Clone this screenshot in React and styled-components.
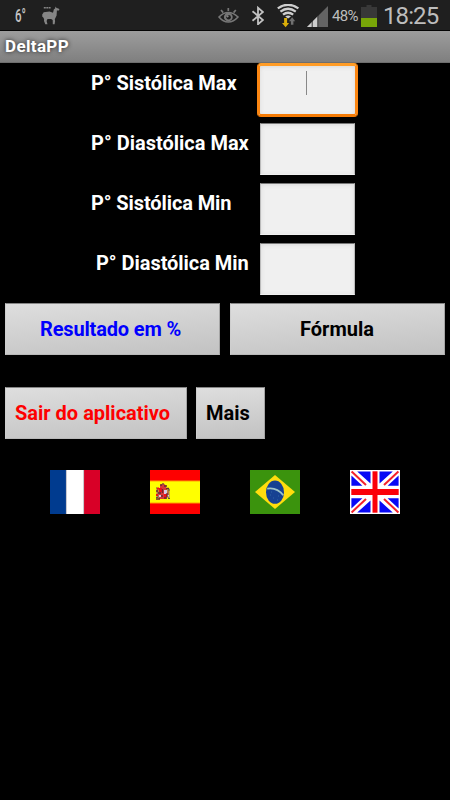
import React from "react";
import styled, { createGlobalStyle } from "styled-components";

const GlobalStyle = createGlobalStyle`
  * { box-sizing: border-box; }
  body { margin: 0; background: #000; overflow: hidden; }
`;

const Screen = styled.div`
  width: 450px;
  height: 800px;
  display: flex;
  flex-direction: column;
  background: #000;
  font-family: Roboto, "Liberation Sans", sans-serif;
`;

const StatusBar = styled.header`
  height: 31px;
  flex: none;
  display: flex;
  align-items: flex-start;
  background: #1f1f1f;
  border-bottom: 1px solid #050505;
  color: #bdbdbd;
  svg { display: block; flex: none; }
`;

const Temperature = styled.span`
  width: 26px;
  margin: 5px 0 0 15px;
  font-size: 18px;
  line-height: 22px;
  transform: scaleX(0.64);
  transform-origin: left;
  color: #c4c4c4;
  font-weight: 500;
`;

const Spacer = styled.div`
  flex: 1;
`;

const Percent = styled.span`
  width: 29px;
  margin-top: 6px;
  font-size: 15px;
  line-height: 20px;
  letter-spacing: -0.65px;
`;

const Clock = styled.span`
  width: 67px;
  margin-top: 3px;
  font-size: 24px;
  line-height: 27px;
  letter-spacing: -0.9px;
`;

const TitleBar = styled.div`
  height: 32px;
  flex: none;
  padding: 5px 5px 0;
  background: linear-gradient(#9d9d9d, #7f7f7f);
  border-bottom: 1px solid #6e6e6e;
  color: #fff;
  font-size: 17px;
  line-height: 21px;
  font-weight: 700;
  letter-spacing: 0.35px;
  text-shadow: 0 0 4px #222;
`;

const Form = styled.main`
  display: flex;
  flex-direction: column;
`;

const FieldRow = styled.label`
  height: 60px;
  display: grid;
  grid-template-columns: 257px 101px;
  align-items: start;
`;

const FieldLabel = styled.span`
  padding-top: 8px;
  padding-left: ${(p) => p.$left}px;
  color: #fff;
  font-size: 20px;
  line-height: 24px;
  font-weight: 700;
  white-space: nowrap;
  letter-spacing: ${(p) => p.$spacing}px;
`;

const FieldBox = styled.span`
  display: flex;
  justify-content: center;
  height: ${(p) => (p.$focused ? 54 : 52)}px;
  margin: ${(p) => (p.$focused ? "0" : "0 3.4px")};
  padding-top: 5px;
  border: ${(p) => (p.$focused ? "3px solid" : "1px solid")};
  border-color: ${(p) => (p.$focused ? "#ff9c26 #fb8612 #f57b05" : "#777 #bbb #f0f0f0")};
  border-radius: ${(p) => (p.$focused ? 4 : 0)}px;
  background: #f0f0f0;
  box-shadow: inset 0 1px 4px #d9d9d9;
`;

const Caret = styled.span`
  width: 1px;
  height: 24px;
  margin-left: -2px;
  background: #888;
`;

const ButtonRow = styled.div`
  display: flex;
  gap: ${(p) => p.$gap}px;
  padding: 0 5px;
  margin-bottom: 32px;
`;

const Button = styled.button`
  width: ${(p) => p.$width}px;
  height: 52px;
  flex: none;
  padding: 0 0 0 ${(p) => p.$inset}px;
  text-align: left;
  border: 1px solid;
  border-color: #858585 #a5a5a5 #b9b9b9 #cecece;
  background: linear-gradient(175deg, #dedede, #c2c2c2);
  color: ${(p) => p.$color};
  font: 700 20px/24px Roboto, "Liberation Sans", sans-serif;
  letter-spacing: ${(p) => p.$spacing || 0}px;
  white-space: nowrap;
`;

const Flags = styled.nav`
  display: flex;
  gap: 50px;
  padding-left: 50px;
  margin-top: -1px;
  svg { display: block; }
`;

const Llama = () => (
  <svg width="20" height="19" viewBox="0 0 20 19" fill="#858585">
    <path d="M2.8 1h2v1.6h-2zM5.3 1h2v1.6h-2zM7.8 1h1.8v1.6H7.8z" />
    <path d="M12 6.8l.9-3.6 1.2-.8.4-1.8 1.1 1.3 1.8.5 1 .9-.4 1.1-2.1.2-.3 5-1.8 3.6.3 1.8-.5 3.3h-1.8l-.1-4.2-1.6-1.1H6.5l-.9 2 .9 3.3H4.3l-1.3-3.3.1-2.1-1-1.7-.8-.4-.1-2.4 1.5-2.1 5.8-.7z" />
  </svg>
);

const Eye = () => (
  <svg width="21" height="18" viewBox="0 0 21 18" fill="none" stroke="#777">
    <path d="M1 11Q5.2 6.5 10.3 6.5T20 11Q15.5 16 10.3 16T1 11Z" strokeWidth="1.6" />
    <circle cx="10.3" cy="11" r="4.4" fill="#777" stroke="none" />
    <circle cx="10.6" cy="11.3" r="2.3" fill="#1f1f1f" stroke="none" />
    <circle cx="9.6" cy="10.3" r="1.1" fill="#888" stroke="none" />
    <path d="M10.3 2v3M3 4l2.2 2.6M17.8 4l-2.2 2.6" strokeWidth="1.7" />
  </svg>
);

const Bluetooth = () => (
  <svg width="13" height="20" viewBox="0 0 13 20" fill="none" stroke="#c2c2c2" strokeWidth="1.8">
    <path d="M1.5 6.2L12 15l-5 4.3V2.8l5 4.2-10.5 8.8" />
  </svg>
);

const Wifi = () => (
  <svg width="23" height="24" viewBox="0 0 23 24" fill="none">
    <path d="M.8 4.4Q11 -2.8 21.4 4.4M3.4 7.6Q11 2 18.8 7.6M6 10.7Q11 6.8 16.2 10.7" stroke="#cecece" strokeWidth="2.3" />
    <path d="M8.2 12.4Q11 10.6 14 12.4L11.1 14.5z" fill="#cecece" />
    <path d="M7.1 14h3v5h2L8.6 23.2 5 19h2.1z" fill="#d9ad09" />
    <path d="M13.9 20.8v-3.5H12l3.1-4 3.1 4h-1.8v3.5z" fill="#707070" />
  </svg>
);

const Signal = () => (
  <svg width="21" height="21" viewBox="0 0 21 21">
    <path d="M0 21L21 0v21z" fill="#646464" />
    <path d="M0 21L11 10v11z" fill="#cecece" />
    <path d="M5.2 15v6M10.8 9v12" stroke="#262626" strokeWidth=".9" />
  </svg>
);

const Battery = () => (
  <svg width="16" height="22" viewBox="0 0 16 22">
    <path d="M5.5 0h5v2H16v20H0V2h5.5z" fill="#383838" />
    <path d="M0 13h16v9H0z" fill="#78a508" />
  </svg>
);

const StatusIcon = styled.span`
  flex: none;
  width: ${(p) => p.$width}px;
  padding-top: ${(p) => p.$top}px;
`;

const FrenchFlag = () => (
  <svg width="50" height="44" viewBox="0 0 50 44">
    <path d="M0 0h50v44H0z" fill="#fff" />
    <path d="M0 0h16v44H0z" fill="#003b8f" />
    <path d="M34 0h16v44H34z" fill="#d80027" />
    <path d="M16.4 0v44M33.6 0v44" stroke="#b5b5bc" strokeWidth=".8" />
  </svg>
);

const SpanishFlag = () => (
  <svg width="50" height="44" viewBox="0 0 50 44">
    <path d="M0 0h50v44H0z" fill="#fe0000" />
    <path d="M0 11h50v22H0z" fill="#ff0" />
    <path d="M0 11h50M0 33h50" stroke="#ffa000" />
    <path d="M10 15.5l3-2.5 3 2.5v3h-6zM9.5 18h7.5l1 6.5-2 4.5h-7l-1.5-3z" fill="#d63a3a" />
    <path d="M6.5 18.5h2.2V28H6.5zM17.5 18.5h2V28h-2z" fill="#a87550" />
    <path d="M9 18h3v4H9zM14 24h3v3h-3zM6 24h2v2H6zM7 17.5h2v2H7z" fill="#f01018" />
    <path d="M14 20h3v4h-3zM9 25h2v2H9zM17 25h2v1.6h-2z" fill="#d8cbe4" />
    <path d="M10 15h2M14 16h3M8 23h3M12.5 19v4M17 23v4M6 29h4M6 21h2M14 28h3M16 18.5h3M11 26h2" stroke="#6b2a30" strokeWidth="1.3" />
    <path d="M6 27.5h2M18 28.5h2M6 18h1M18 20h2M12 14h2" stroke="#55603c" />
  </svg>
);

const BrazilianFlag = () => (
  <svg width="50" height="44" viewBox="0 0 50 44">
    <path d="M0 0h50v44H0z" fill="#3b930d" />
    <path d="M5 22L25 5l20 17-20 17z" fill="#ffdd0d" />
    <ellipse cx="25" cy="22.2" rx="9" ry="11.6" fill="#164192" />
    <path d="M17.2 18.6Q27 17 33.2 25.2" fill="none" stroke="#9dc4c7" strokeWidth="1.6" />
    <path d="M20 25h1M23 28h1M28 26h1M27 30h1M21 22h1" stroke="#2f65a5" />
  </svg>
);

const BritishQuarter = () => (
  <>
    <path d="M7.2 1.4H20.5v12.2zM1.4 5.5v10.3h11z" fill="#0808f5" />
    <path d="M1.6 1.6L16 15" stroke="#f4202a" strokeWidth="2" />
  </>
);

const BritishFlag = () => (
  <svg width="50" height="44" viewBox="0 0 50 44">
    <path d="M0 0h50v44H0z" fill="#fff" />
    <BritishQuarter />
    <g transform="translate(50 0) scale(-1 1)"><BritishQuarter /></g>
    <g transform="translate(0 44) scale(1 -1)"><BritishQuarter /></g>
    <g transform="translate(50 44) scale(-1 -1)"><BritishQuarter /></g>
    <path d="M25 1.3v41.4" stroke="#fb0009" strokeWidth="5" />
    <path d="M1.3 22h47.4" stroke="#fb0009" strokeWidth="6" />
  </svg>
);

const fields = [
  { text: "P° Sistólica Max", left: 91, spacing: -0.05 },
  { text: "P° Diastólica Max", left: 91, spacing: 0 },
  { text: "P° Sistólica Min", left: 91, spacing: -0.1 },
  { text: "P° Diastólica Min", left: 96, spacing: -0.04 },
];

export default function App() {
  return (
    <Screen>
      <GlobalStyle />
      <StatusBar>
        <Temperature>6°</Temperature>
        <StatusIcon $width={20} $top={6}><Llama /></StatusIcon>
        <Spacer />
        <StatusIcon $width={33} $top={6}><Eye /></StatusIcon>
        <StatusIcon $width={26} $top={5}><Bluetooth /></StatusIcon>
        <StatusIcon $width={30} $top={4}><Wifi /></StatusIcon>
        <StatusIcon $width={25} $top={6}><Signal /></StatusIcon>
        <Percent>48%</Percent>
        <StatusIcon $width={22} $top={5}><Battery /></StatusIcon>
        <Clock>18:25</Clock>
      </StatusBar>
      <TitleBar>DeltaPP</TitleBar>
      <Form>
        {fields.map((field, index) => (
          <FieldRow key={field.text}>
            <FieldLabel $left={field.left} $spacing={field.spacing}>{field.text}</FieldLabel>
            <FieldBox $focused={index === 0}>{index === 0 && <Caret />}</FieldBox>
          </FieldRow>
        ))}
      </Form>
      <ButtonRow $gap={10}>
        <Button $width={215} $inset={34} $spacing={-0.16} $color="#0000fe">Resultado em %</Button>
        <Button $width={215} $inset={69} $color="#000">Fórmula</Button>
      </ButtonRow>
      <ButtonRow $gap={9.5}>
        <Button $width={181.5} $inset={9} $color="#fe0000">Sair do aplicativo</Button>
        <Button $width={69} $inset={9} $color="#000">Mais</Button>
      </ButtonRow>
      <Flags>
        <FrenchFlag />
        <SpanishFlag />
        <BrazilianFlag />
        <BritishFlag />
      </Flags>
    </Screen>
  );
}
